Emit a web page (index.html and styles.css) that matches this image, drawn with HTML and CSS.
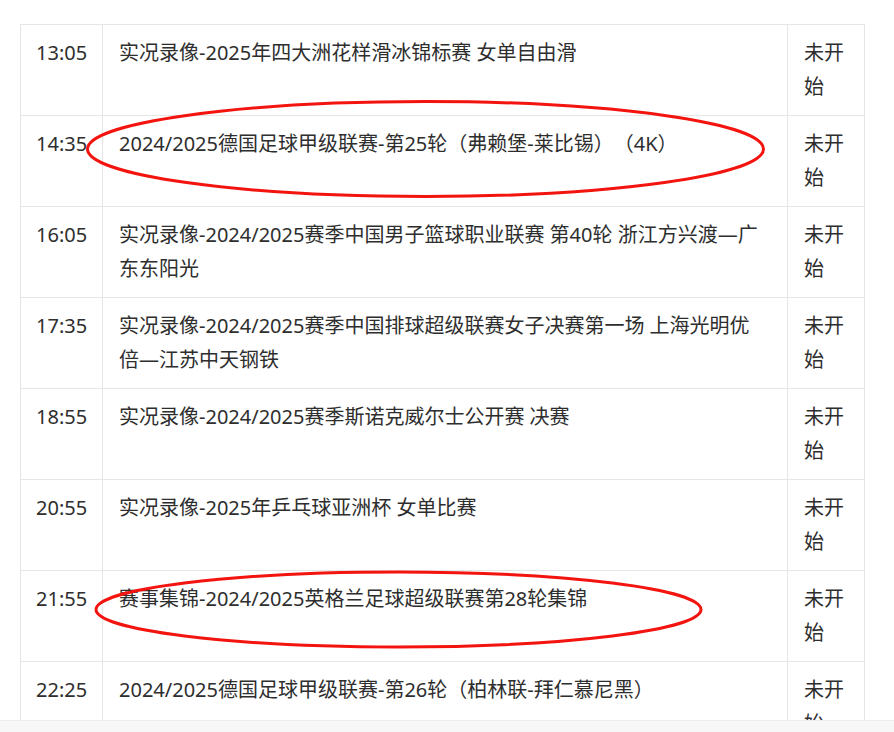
FILE: index.html
```html
<!DOCTYPE html>
<html lang="zh-CN">
<head>
<meta charset="utf-8">
<title>节目单</title>
<link rel="stylesheet" href="styles.css">
</head>
<body>
<div class="page">
  <table class="schedule">
    <colgroup>
      <col class="col-time">
      <col class="col-title">
      <col class="col-status">
    </colgroup>
    <tbody>
      <tr><td class="time">13:05</td><td class="title">实况录像-2025年四大洲花样滑冰锦标赛 女单自由滑</td><td class="status">未开始</td></tr>
      <tr><td class="time">14:35</td><td class="title">2024/2025德国足球甲级联赛-第25轮（弗赖堡-莱比锡）（4K）</td><td class="status">未开始</td></tr>
      <tr><td class="time">16:05</td><td class="title">实况录像-2024/2025赛季中国男子篮球职业联赛 第40轮 浙江方兴渡—广东东阳光</td><td class="status">未开始</td></tr>
      <tr><td class="time">17:35</td><td class="title">实况录像-2024/2025赛季中国排球超级联赛女子决赛第一场 上海光明优倍—江苏中天钢铁</td><td class="status">未开始</td></tr>
      <tr><td class="time">18:55</td><td class="title">实况录像-2024/2025赛季斯诺克威尔士公开赛 决赛</td><td class="status">未开始</td></tr>
      <tr><td class="time">20:55</td><td class="title">实况录像-2025年乒乓球亚洲杯 女单比赛</td><td class="status">未开始</td></tr>
      <tr><td class="time">21:55</td><td class="title">赛事集锦-2024/2025英格兰足球超级联赛第28轮集锦</td><td class="status">未开始</td></tr>
      <tr><td class="time">22:25</td><td class="title">2024/2025德国足球甲级联赛-第26轮（柏林联-拜仁慕尼黑）</td><td class="status">未开始</td></tr>
    </tbody>
  </table>
  <svg class="marks" width="894" height="732" viewBox="0 0 894 732" aria-hidden="true">
    <ellipse cx="425.5" cy="149" rx="338" ry="47.5" fill="none" stroke="#f4140f" stroke-width="3"/>
    <ellipse cx="398.5" cy="609.5" rx="302.5" ry="37.5" fill="none" stroke="#f4140f" stroke-width="3"/>
  </svg>
</div>
<div class="footer-bar"></div>
</body>
</html>
```

FILE: styles.css
```css
html, body {
  margin: 0;
  padding: 0;
  background: #ffffff;
}

body {
  font-family: "Noto Sans", "Noto Sans CJK SC", sans-serif;
  color: #2e2e2e;
  overflow: hidden;
}

.page {
  position: relative;
  padding: 24px 0 0 20px;
}

.schedule {
  border-collapse: collapse;
  table-layout: fixed;
  width: 844px;
  font-size: 20px;
  line-height: 34px;
  text-spacing-trim: space-all;
  font-feature-settings: "halt" 0, "chws" 0;
}

.col-time { width: 82px; }
.col-title { width: 685px; }
.col-status { width: 77px; }

.schedule td {
  border: 1px solid #e6e6e6;
  padding: 11px 16px;
  vertical-align: top;
  height: 68px;
}

.schedule td.time {
  padding-left: 15px;
  padding-right: 10px;
  white-space: nowrap;
}

.schedule td.title {
  padding-right: 22px;
}

.marks {
  position: absolute;
  top: 0;
  left: 0;
  pointer-events: none;
}

.footer-bar {
  position: fixed;
  left: 0;
  right: 0;
  bottom: 0;
  height: 11px;
  background: #f7f7f7;
  border-top: 1px solid #ededed;
}
```
